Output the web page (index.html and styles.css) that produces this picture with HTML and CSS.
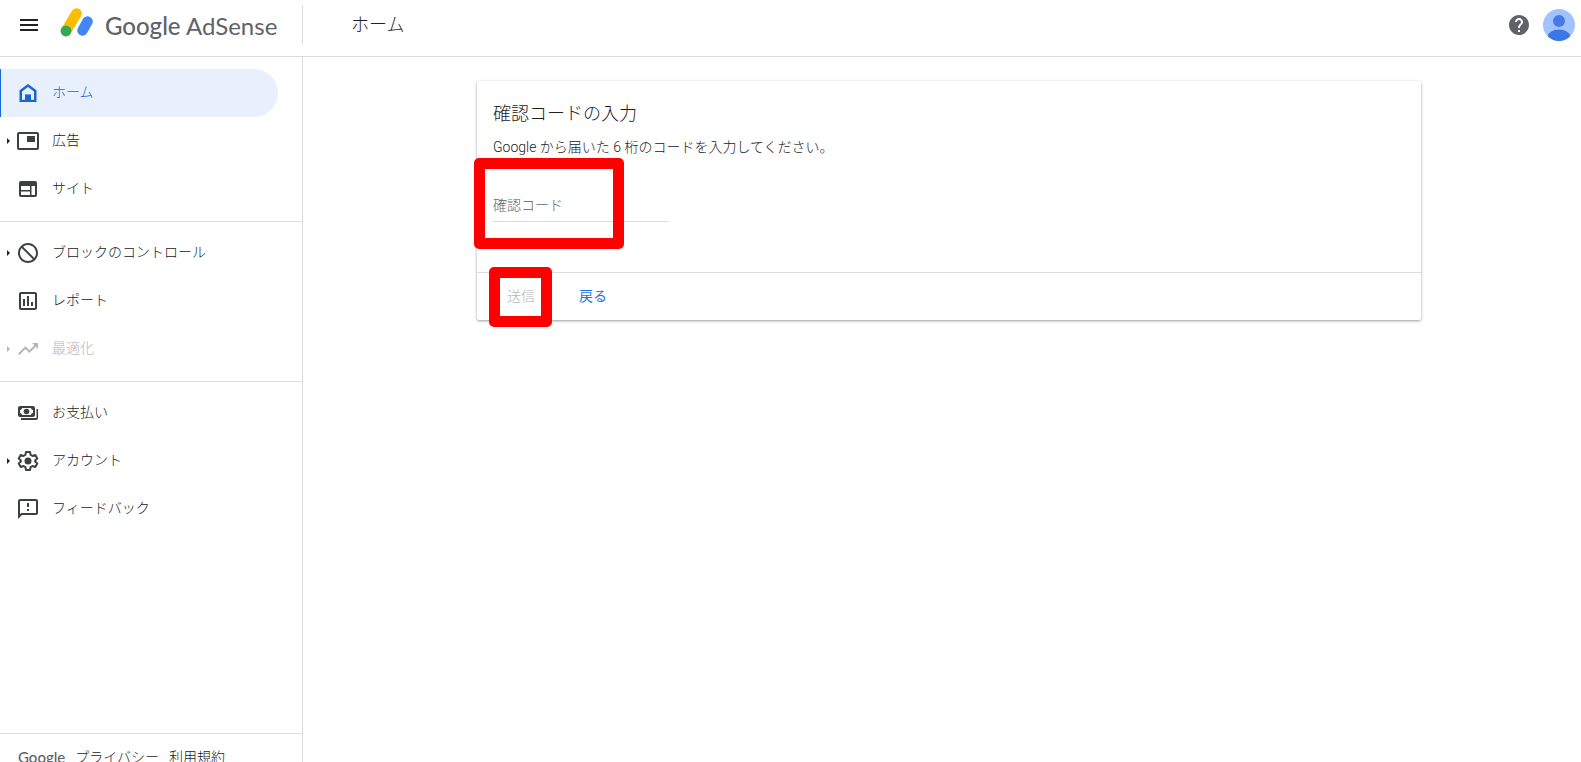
FILE: index.html
```html
<!DOCTYPE html>
<html lang="ja">
<head>
  <meta charset="UTF-8">
  <meta name="viewport" content="width=device-width, initial-scale=1">
  <title>Google AdSense</title>
  <link rel="stylesheet" href="styles.css">
</head>
<body>
  <header class="topbar">
    <div class="brand">
      <button class="icon-button" type="button" aria-label="メインメニュー">
        <svg width="24" height="24" viewBox="0 0 24 24"><path d="M3 18h18v-2H3v2zm0-5h18v-2H3v2zm0-7v2h18V6H3z"/></svg>
      </button>
      <a class="logo" href="#">
        <svg width="34" height="30" viewBox="0 0 34 30">
          <path d="M6 23L16.500 5.500" stroke="#fbbc04" stroke-width="10.500" stroke-linecap="round"/>
          <path d="M22.500 22.500L27.500 13.500" stroke="#4285f4" stroke-width="10.500" stroke-linecap="round"/>
          <circle cx="6" cy="23" r="5.400" fill="#34a853"/>
        </svg>
        <span class="wordmark"><b>Google</b> AdSense</span>
      </a>
    </div>
    <h1 class="page-title">ホーム</h1>
    <div class="tools">
      <button class="icon-button" type="button" aria-label="ヘルプ">
        <svg class="help" width="24" height="24" viewBox="0 0 24 24"><path d="M12 2C6.480 2 2 6.480 2 12s4.480 10 10 10 10-4.480 10-10S17.520 2 12 2zm1 17h-2v-2h2v2zm2.070-7.750l-.9.920C13.450 12.900 13 13.500 13 15h-2v-.5c0-1.100.45-2.100 1.170-2.830l1.240-1.260c.37-.36.59-.86.59-1.410 0-1.100-.9-2-2-2s-2 .9-2 2H8c0-2.210 1.790-4 4-4s4 1.790 4 4c0 .88-.36 1.680-.93 2.250z"/></svg>
      </button>
      <button class="icon-button" type="button" aria-label="アカウント">
        <svg width="32" height="32" viewBox="0 0 32 32">
          <clipPath id="avatar"><circle cx="16" cy="16" r="16"/></clipPath>
          <g clip-path="url(#avatar)">
            <rect width="32" height="32" fill="#a0c3ff"/>
            <circle cx="16" cy="12" r="6" fill="#4779e8"/>
            <ellipse cx="16" cy="27" rx="11" ry="6.500" fill="#3b78e7"/>
          </g>
        </svg>
      </button>
    </div>
  </header>

  <div class="layout">
    <aside class="sidebar">
      <nav>
        <ul class="menu">
          <li><a class="item active" href="#">
            <svg viewBox="0 0 24 24"><path fill-rule="evenodd" d="M12 3l8.500 6.300V21h-17V9.300L12 3zm0 2.900L6 10.400v8.300h3v-5h6v5h3v-8.300l-6-4.500z"/><path d="M9 13.500h6V20H9z"/></svg>
            <span class="label">ホーム</span></a></li>
          <li><a class="item expandable" href="#">
            <svg viewBox="0 0 24 24"><path d="M19 7h-8v6h8V7zm2-4H3c-1.100 0-2 .9-2 2v14c0 1.100.9 2 2 2h18c1.100 0 2-.9 2-2V5c0-1.100-.9-2-2-2zm0 16H3V5h18v14z"/></svg>
            <span class="label">広告</span></a></li>
          <li><a class="item" href="#">
            <svg viewBox="0 0 24 24"><path fill-rule="evenodd" d="M5 4h14c1.100 0 2 .9 2 2v12c0 1.100-.9 2-2 2H5c-1.100 0-2-.9-2-2V6c0-1.100.9-2 2-2zm0 5v4h9V9H5zm0 5.500V18h9v-3.500H5zM15.500 9v9H19V9h-3.500z"/></svg>
            <span class="label">サイト</span></a></li>
        </ul>
        <ul class="menu">
          <li><a class="item expandable" href="#">
            <svg viewBox="0 0 24 24"><path d="M12 2C6.480 2 2 6.480 2 12s4.480 10 10 10 10-4.480 10-10S17.520 2 12 2zM4 12c0-4.420 3.580-8 8-8 1.850 0 3.550.63 4.900 1.690L5.690 16.900C4.630 15.550 4 13.850 4 12zm8 8c-1.850 0-3.550-.63-4.900-1.690L18.310 7.100C19.370 8.450 20 10.150 20 12c0 4.420-3.580 8-8 8z" transform="matrix(-1 0 0 1 24 0)"/></svg>
            <span class="label">ブロックのコントロール</span></a></li>
          <li><a class="item" href="#">
            <svg viewBox="0 0 24 24"><path d="M19 3H5c-1.100 0-2 .9-2 2v14c0 1.100.9 2 2 2h14c1.100 0 2-.9 2-2V5c0-1.100-.9-2-2-2zm0 16H5V5h14v14zM7 10h2v7H7zm4-3h2v10h-2zm4 6h2v4h-2z"/></svg>
            <span class="label">レポート</span></a></li>
          <li><a class="item expandable disabled" href="#" aria-disabled="true">
            <svg viewBox="0 0 24 24"><path d="M16 6l2.290 2.290-4.880 4.880-4-4L2 16.590 3.410 18l6-6 4 4 6.300-6.290L22 12V6z"/></svg>
            <span class="label">最適化</span></a></li>
        </ul>
        <ul class="menu">
          <li><a class="item" href="#">
            <svg viewBox="0 0 24 24"><path fill-rule="evenodd" d="M4 5h13c1.100 0 2 .9 2 2v7c0 1.100-.9 2-2 2H4c-1.100 0-2-.9-2-2V7c0-1.100.9-2 2-2zm2 2c0 1.100-.9 2-2 2v3c1.100 0 2 .9 2 2h9c0-1.100.9-2 2-2V9c-1.100 0-2-.9-2-2H6z"/><circle cx="10.500" cy="10.500" r="2.800"/><path d="M20.500 8H22v9c0 1.100-.9 2-2 2H5v-2h15.500z"/></svg>
            <span class="label">お支払い</span></a></li>
          <li><a class="item expandable" href="#">
            <svg viewBox="0 0 24 24"><path class="outline" d="M10 3h4l.6 2.900 1.900 1.100 2.800-1 2 3.500-2.200 1.900v1.200l2.200 1.900-2 3.500-2.800-1-1.900 1.100L14 21h-4l-.6-2.900L7.500 17l-2.800 1-2-3.500 2.200-1.900v-1.200L2.700 9.500l2-3.500 2.800 1 1.900-1.100z"/><circle cx="12" cy="12" r="3.500"/></svg>
            <span class="label">アカウント</span></a></li>
          <li><a class="item" href="#">
            <svg viewBox="0 0 24 24"><path d="M20 2H4c-1.100 0-2 .9-2 2v18l4-4h14c1.100 0 2-.9 2-2V4c0-1.100-.9-2-2-2zm0 14H5.170L4 17.170V4h16v12zM11 6h2v4h-2zm0 6h2v2h-2z"/></svg>
            <span class="label">フィードバック</span></a></li>
        </ul>
      </nav>
      <footer class="legal">
        <a class="google" href="#">Google</a>
        <a href="#">プライバシー</a>
        <a href="#">利用規約</a>
      </footer>
    </aside>

    <main class="content">
      <form class="card">
        <div class="card-body">
          <h2>確認コードの入力</h2>
          <p>Google から届いた 6 桁のコードを入力してください。</p>
          <div class="field marked">
            <input type="text" id="code" placeholder="確認コード" aria-label="確認コード" maxlength="6">
          </div>
        </div>
        <div class="card-actions">
          <div class="marked"><button type="submit" disabled>送信</button></div>
          <button class="back" type="button">戻る</button>
        </div>
      </form>
    </main>
  </div>
</body>
</html>
```
FILE: styles.css
```css
*, *::before, *::after {
  box-sizing: border-box;
}
body {
  margin: 0;
  height: 100vh;
  display: flex;
  flex-direction: column;
  overflow: hidden;
  background: #fff;
  color: #202124;
  font-family: Roboto, 'Noto Sans CJK JP', sans-serif;
  font-size: 14px;
  font-weight: 300;
}
a {
  color: inherit;
  text-decoration: none;
}
button {
  border: none;
  background: none;
  padding: 0;
  font: inherit;
  cursor: pointer;
}
svg {
  display: block;
  flex: none;
  fill: currentColor;
}

.topbar {
  display: flex;
  align-items: center;
  height: 57px;
  flex: none;
  padding-right: 6px;
  padding-bottom: 7px;
  border-bottom: 1px solid #dadce0;
}
.brand {
  display: flex;
  align-items: center;
  width: 303px;
  height: 40px;
  padding-left: 17px;
  gap: 19px;
  border-right: 1px solid #dadce0;
}
.icon-button {
  color: #202124;
}
.logo {
  display: flex;
  align-items: center;
  gap: 11px;
}
.logo svg {
  margin-bottom: 3px;
}
.wordmark {
  padding-top: 2px;
  color: #5f6368;
  font-family: Lato, sans-serif;
  font-size: 24px;
  font-weight: 400;
  line-height: 32px;
  white-space: nowrap;
}
.wordmark b {
  font-weight: 500;
}
.page-title {
  margin: 0 0 0 48px;
  padding-bottom: 4px;
  font-size: 18px;
  font-weight: 300;
}
.tools {
  display: flex;
  align-items: center;
  gap: 12px;
  margin-left: auto;
}
.help {
  color: #5f6368;
}

.layout {
  display: flex;
  flex: 1;
  min-height: 0;
}
.sidebar {
  display: flex;
  flex-direction: column;
  justify-content: space-between;
  width: 303px;
  flex: none;
  padding-top: 4px;
  border-right: 1px solid #dadce0;
}
.menu {
  list-style: none;
  margin: 0;
  padding: 8px 0;
}
.menu + .menu {
  border-top: 1px solid #dadce0;
  padding-top: 7px;
}
.item {
  display: flex;
  align-items: center;
  gap: 12px;
  height: 48px;
  margin-right: 24px;
  padding-left: 16px;
  border-radius: 0 24px 24px 0;
}
.item svg {
  width: 24px;
  height: 24px;
  color: #3c4043;
}
.item .outline {
  fill: none;
  stroke: currentColor;
  stroke-width: 2;
  stroke-linejoin: round;
}
.label {
  padding-bottom: 4px;
}
.item.active {
  border-left: 1px solid #1967d2;
  padding-left: 15px;
  background: #e8f0fe;
  color: #1967d2;
}
.item.active svg, .item.disabled svg {
  color: inherit;
}
.expandable {
  padding-left: 7px;
}
.expandable::before {
  content: '';
  border: 3px solid transparent;
  border-left-color: currentColor;
  border-right: none;
  margin-right: -6px;
}
.disabled {
  color: #b4b6b8;
}
.legal {
  display: flex;
  gap: 10px;
  height: 29px;
  padding: 11px 18px 0;
  border-top: 1px solid #dadce0;
  line-height: 24px;
  white-space: nowrap;
}
.google {
  color: #5f6368;
  font-family: Lato, sans-serif;
  font-size: 15px;
  font-weight: 500;
}

.content {
  flex: 1;
  padding: 24px 160px 24px 174px;
}
.card {
  border-radius: 2px;
  background: #fff;
  box-shadow: 0 1px 3px rgba(0, 0, 0, 0.4);
}
.card-body {
  padding: 21px 16px 50px;
}
.card h2 {
  margin: 0 0 9px;
  font-size: 18px;
  font-weight: 300;
  line-height: 24px;
}
.card p {
  margin: 0 0 30px;
  line-height: 24px;
}
.field {
  width: 176px;
}
.field input {
  display: block;
  width: 100%;
  height: 33px;
  padding: 0;
  border: none;
  border-bottom: 1px solid #dadce0;
  outline: none;
  font: inherit;
}
.field input::placeholder {
  color: #5f6368;
  opacity: 1;
}
.card-actions {
  display: flex;
  align-items: center;
  gap: 16px;
  height: 48px;
  padding: 0 16px;
  border-top: 1px solid #dadce0;
}
.card-actions button {
  height: 36px;
  padding: 0 14px 4px;
}
.card-actions button:disabled {
  color: #b4b6b8;
}
.card-actions .back {
  color: #1a73e8;
  font-weight: 400;
}

/* red highlight frames */
.marked {
  position: relative;
}
.marked::after {
  content: '';
  position: absolute;
  border: 11px solid #f00;
  border-radius: 5px;
  pointer-events: none;
}
.field.marked::after {
  top: -31px;
  left: -19px;
  width: 150px;
  height: 91px;
}
.card-actions .marked::after {
  top: -12px;
  left: -4px;
  width: 63px;
  height: 60px;
}
```
